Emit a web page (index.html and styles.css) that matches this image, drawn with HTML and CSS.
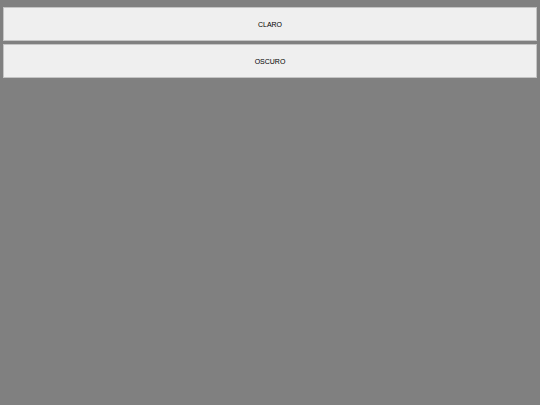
FILE: index.html
```html
<!DOCTYPE html>
<html>
<head>
<meta charset="utf-8">
<link rel="stylesheet" href="styles.css">
</head>
<body>
<div class="menu">
  <button class="opt">CLARO</button>
  <button class="opt">OSCURO</button>
</div>
</body>
</html>
```
FILE: styles.css
```css
html, body {
  margin: 0;
  padding: 0;
  background: #808080;
  height: 100%;
}
.menu {
  display: flex;
  flex-direction: column;
  gap: 3px;
  padding: 7px 3px 0 3px;
}
.opt {
  display: block;
  width: 100%;
  height: 34px;
  margin: 0;
  padding: 0;
  background: #efefef;
  border: 1px solid #c4c4c4;
  border-radius: 0;
  font-family: "Liberation Sans", Arial, sans-serif;
  font-size: 7px;
  color: #000;
  text-align: center;
}
```
